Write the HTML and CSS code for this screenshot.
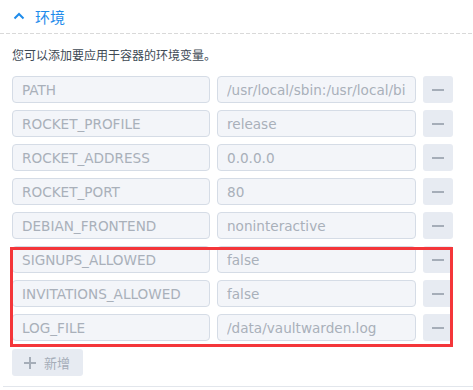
FILE: index.html
```html
<!DOCTYPE html>
<html>
<head>
<title>环境</title>
<link rel="stylesheet" href="styles.css">
</head>
<body>

<div class="panel">
  <div class="section-head">
    <svg class="chevron" width="12" height="8" viewBox="0 0 12 8">
      <path d="M1.5 6.5 L6 2 L10.5 6.5" fill="none" stroke="#1f8ceb" stroke-width="2"/>
    </svg>
    <span class="section-title">环境</span>
  </div>
  <div class="dashed"></div>

  <div class="section-body">
    <p class="desc">您可以添加要应用于容器的环境变量。</p>

    <div class="env-list">
      <div class="env-row">
        <input class="field key" type="text" value="PATH">
        <input class="field val" type="text" value="/usr/local/sbin:/usr/local/bin:/usr/sbin:/usr/bin">
        <button class="remove"><span></span></button>
      </div>
      <div class="env-row">
        <input class="field key" type="text" value="ROCKET_PROFILE">
        <input class="field val" type="text" value="release">
        <button class="remove"><span></span></button>
      </div>
      <div class="env-row">
        <input class="field key" type="text" value="ROCKET_ADDRESS">
        <input class="field val" type="text" value="0.0.0.0">
        <button class="remove"><span></span></button>
      </div>
      <div class="env-row">
        <input class="field key" type="text" value="ROCKET_PORT">
        <input class="field val" type="text" value="80">
        <button class="remove"><span></span></button>
      </div>
      <div class="env-row">
        <input class="field key" type="text" value="DEBIAN_FRONTEND">
        <input class="field val" type="text" value="noninteractive">
        <button class="remove"><span></span></button>
      </div>

      <!-- highlighted group -->
      <div class="highlight">
        <div class="env-row">
          <input class="field key" type="text" value="SIGNUPS_ALLOWED">
          <input class="field val" type="text" value="false">
          <button class="remove"><span></span></button>
        </div>
        <div class="env-row">
          <input class="field key" type="text" value="INVITATIONS_ALLOWED">
          <input class="field val" type="text" value="false">
          <button class="remove"><span></span></button>
        </div>
        <div class="env-row">
          <input class="field key" type="text" value="LOG_FILE">
          <input class="field val" type="text" value="/data/vaultwarden.log">
          <button class="remove"><span></span></button>
        </div>
      </div>
    </div>

    <button class="add-btn">
      <svg class="plus" width="12" height="12" viewBox="0 0 12 12">
        <path d="M6 0 V12 M0 6 H12" stroke="#a5adb8" stroke-width="2"/>
      </svg>
      新增
    </button>
  </div>

  <div class="bottom-line"></div>
</div>

</body>
</html>
```

FILE: styles.css
```css
/* Reset */
* {
  margin: 0;
  padding: 0;
  box-sizing: border-box;
}

body {
  font-family: 'DejaVu Sans', 'Noto Sans CJK SC', sans-serif;
  background-color: #fff;
  color: #333;
  width: 473px;
  overflow: hidden;
}

/* Section header */
.section-head {
  display: flex;
  align-items: center;
  height: 33px;
  padding-left: 13px;
}

.chevron {
  display: block;
  margin-right: 10px;
  margin-top: -1px;
}

.section-title {
  font-family: 'Noto Sans CJK SC', sans-serif;
  font-size: 15px;
  color: #1f8ceb;
  margin-top: -1px;
}

.dashed {
  height: 1px;
  background-image: repeating-linear-gradient(to right, #d9d9d9 0, #d9d9d9 4px, transparent 4px, transparent 6px);
}

/* Body */
.section-body {
  padding: 12px 20px 0 12px;
}

.desc {
  font-family: 'Noto Sans CJK SC', sans-serif;
  font-size: 12px;
  line-height: 18px;
  color: #404a55;
  margin-bottom: 12px;
}

.env-list,
.highlight {
  display: flex;
  flex-direction: column;
  gap: 7px;
}

.highlight {
  position: relative;
}

/* Red annotation box */
.highlight::after {
  content: "";
  position: absolute;
  left: -2px;
  top: 1px;
  right: 0;
  bottom: -6px;
  border: 3px solid #f4363a;
  pointer-events: none;
}

.env-row {
  display: flex;
  gap: 7px;
  height: 27px;
}

.field {
  height: 27px;
  border: 1px solid #d5dce6;
  border-radius: 4px;
  background-color: #f3f5f9;
  color: #a9b0ba;
  font-family: 'DejaVu Sans', sans-serif;
  font-size: 13.6px;
  padding: 0 9px;
  outline: none;
}

.key {
  width: 198px;
}

.val {
  width: 199px;
}

.remove {
  width: 30px;
  height: 27px;
  border: none;
  border-radius: 3px;
  background-color: #e7ebf2;
  display: flex;
  align-items: center;
  justify-content: center;
}

.remove span {
  display: block;
  width: 12px;
  height: 2px;
  background-color: #a5adb8;
}

/* Add button */
.add-btn {
  display: flex;
  align-items: center;
  margin-top: 8px;
  width: 71px;
  height: 27px;
  border: none;
  border-radius: 3px;
  background-color: #e7ebf2;
  color: #a5adb8;
  font-family: 'Noto Sans CJK SC', sans-serif;
  font-size: 13px;
  padding-left: 12px;
}

.plus {
  display: block;
  margin-right: 8px;
}

.bottom-line {
  margin: 10px 0 0 3px;
  height: 1px;
  background-color: #e2e6ec;
}
```
